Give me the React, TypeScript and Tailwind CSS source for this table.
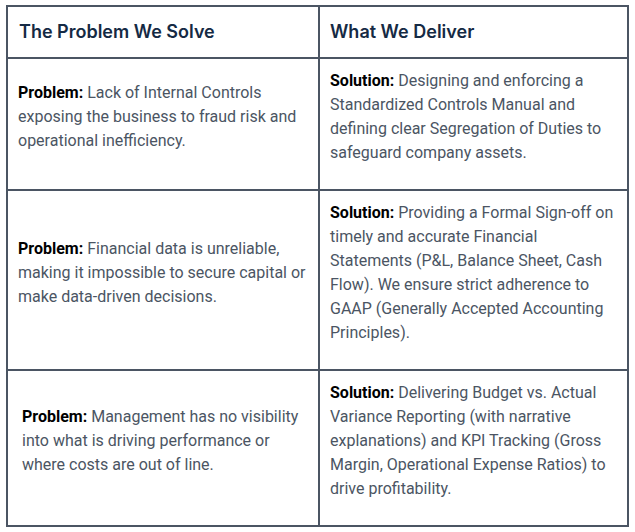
const rows = [
  {
    problem:
      "Lack of Internal Controls exposing the business to fraud risk and operational inefficiency.",
    solution:
      "Designing and enforcing a Standardized Controls Manual and defining clear Segregation of Duties to safeguard company assets.",
    indent: false,
  },
  {
    problem:
      "Financial data is unreliable, making it impossible to secure capital or make data-driven decisions.",
    solution:
      "Providing a Formal Sign-off on timely and accurate Financial Statements (P&L, Balance Sheet, Cash Flow). We ensure strict adherence to GAAP (Generally Accepted Accounting Principles).",
    indent: false,
  },
  {
    problem:
      "Management has no visibility into what is driving performance or where costs are out of line.",
    solution:
      "Delivering Budget vs. Actual Variance Reporting (with narrative explanations) and KPI Tracking (Gross Margin, Operational Expense Ratios) to drive profitability.",
    indent: true,
  },
];

const App = () => {
  return (
    <div className="w-[635px] h-[532px] bg-white pl-[6px] pt-[5px] font-['Roboto',sans-serif]">
      <div className="w-[623px] border-2 border-[#4b5563] grid grid-cols-[312px_1fr]">
        <div className="border-r-2 border-b-2 border-[#4b5563] px-[11px] py-[10px] leading-[30px] text-[18px] font-semibold text-[#152a44] font-['Inter',sans-serif]">
          The Problem We Solve
        </div>
        <div className="border-b-2 border-[#4b5563] px-[10px] py-[10px] leading-[30px] text-[18px] font-semibold text-[#152a44] font-['Inter',sans-serif]">
          What We Deliver
        </div>
        {rows.map((row, i) => {
          const last = i === rows.length - 1;
          return (
            <>
              <div
                key={`p${i}`}
                className={`flex flex-col justify-center border-r-2 border-[#4b5563] py-[10px] pr-[10px] ${
                  row.indent ? "pl-[14px]" : "pl-[10px]"
                } ${last ? "" : "border-b-2"}`}
              >
                <p className="mb-[14px] text-[16px] leading-[24px] text-[#4b5563]">
                  <span className="font-bold text-black">Problem:</span>{" "}
                  {row.problem}
                </p>
              </div>
              <div
                key={`s${i}`}
                className={`flex flex-col justify-center border-[#4b5563] p-[10px] ${
                  last ? "" : "border-b-2"
                }`}
              >
                <p className="mb-[14px] text-[16px] leading-[24px] text-[#4b5563]">
                  <span className="font-bold text-black">Solution:</span>{" "}
                  {row.solution}
                </p>
              </div>
            </>
          );
        })}
      </div>
    </div>
  );
};

export default App;
